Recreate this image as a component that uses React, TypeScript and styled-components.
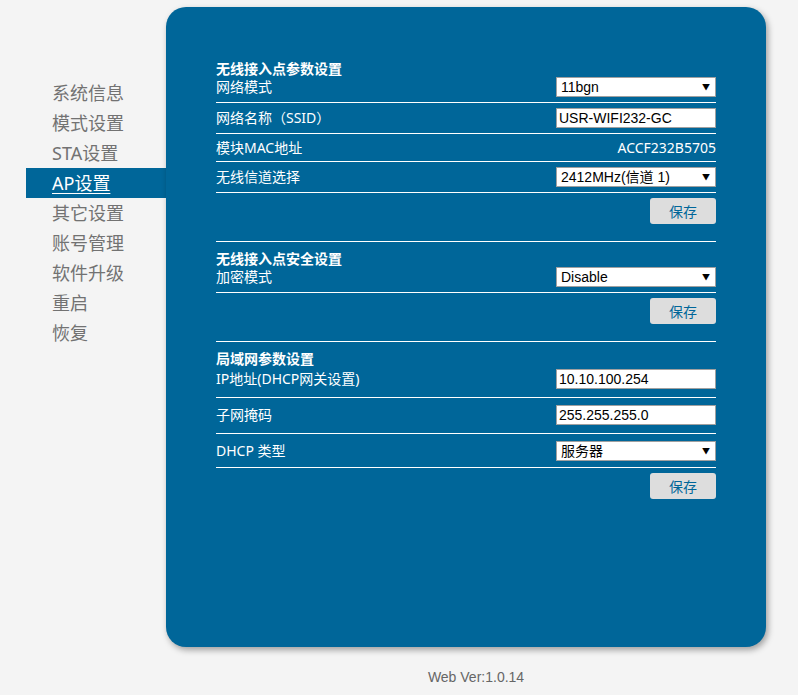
import React from 'react';
import styled, { createGlobalStyle } from 'styled-components';

const GlobalStyle = createGlobalStyle`
  body {
    margin: 0;
    background: #f4f4f4;
    font-family: 'Noto Sans', 'Noto Sans CJK SC', sans-serif;
  }
`;

const Page = styled.div`
  width: 798px;
  height: 695px;
  display: flex;
  flex-direction: column;
`;

const Main = styled.div`
  display: flex;
  padding-left: 26px;
`;

const Side = styled.ul`
  width: 140px;
  margin: 0;
  padding: 78px 0 0;
  list-style: none;
`;

const SideItem = styled.li<{ $active?: boolean }>`
  height: 30px;
  line-height: 30px;
  padding-left: 26px;
  font-size: 18px;
  font-family: 'Noto Sans', 'Noto Sans CJK SC', sans-serif;
  color: ${(p) => (p.$active ? '#ffffff' : '#727272')};
  background: ${(p) => (p.$active ? '#006699' : 'transparent')};
  text-decoration: ${(p) => (p.$active ? 'underline' : 'none')};
  text-underline-offset: 3px;
  cursor: pointer;
`;

const Panel = styled.div`
  margin-top: 7px;
  width: 600px;
  height: 640px;
  box-sizing: border-box;
  padding: 46px 50px 0;
  background: #006699;
  border-radius: 20px;
  box-shadow: 2px 3px 6px rgba(0, 0, 0, 0.35);
  color: #ffffff;
`;

const Section = styled.section<{ $first?: boolean }>`
  padding-top: ${(p) => (p.$first ? 7 : 8)}px;
  border-top: ${(p) => (p.$first ? 'none' : '1px solid #ffffff')};
`;

const Title = styled.div`
  font-size: 14px;
  font-weight: bold;
  line-height: 17px;
`;

const Row = styled.div<{ $pt?: number; $pb?: number }>`
  display: flex;
  align-items: center;
  justify-content: space-between;
  padding: ${(p) => p.$pt ?? 5}px 0 ${(p) => p.$pb ?? 5}px;
  border-bottom: 1px solid #ffffff;
  font-size: 14px;
  line-height: 17px;
`;

// labels next to a field sit a little above the field's middle
const Label = styled.span`
  margin-top: -2px;
`;

const Value = styled.span`
  font-size: 14px;
`;

const TextInput = styled.input`
  width: 160px;
  height: 20px;
  box-sizing: border-box;
  border: 1px solid #a0a0a0;
  padding: 0 2px;
  font-family: 'Liberation Sans', Arial, sans-serif;
  font-size: 14px;
  color: #000;
  background: #fff;
  outline: none;
`;

const SelectWrap = styled.div`
  position: relative;
  width: 160px;
  height: 20px;
  &::after {
    content: '▼';
    position: absolute;
    right: 6px;
    top: 5px;
    font-size: 8px;
    line-height: 10px;
    color: #000;
    pointer-events: none;
  }
`;

const Select = styled.select`
  appearance: none;
  width: 100%;
  height: 100%;
  box-sizing: border-box;
  border: 1px solid #a0a0a0;
  border-radius: 0;
  padding: 0 4px;
  font-family: 'Liberation Sans', 'Noto Sans CJK SC', Arial, sans-serif;
  font-size: 14px;
  color: #000;
  background: #fff;
  outline: none;
`;

const Actions = styled.div`
  display: flex;
  justify-content: flex-end;
  padding: 5px 0 17px;
`;

const SaveButton = styled.button`
  width: 66px;
  height: 26px;
  border: none;
  border-radius: 3px;
  background: #dddddd;
  color: #006699;
  font-family: 'Noto Sans CJK SC', sans-serif;
  font-size: 14px;
  cursor: pointer;
`;

const Footer = styled.div`
  padding: 22px 0 0 154px;
  text-align: center;
  font-family: 'Liberation Sans', Arial, sans-serif;
  font-size: 14px;
  color: #666666;
`;

const Dropdown = ({ value, options }: { value: string; options: string[] }) => (
  <SelectWrap>
    <Select defaultValue={value}>
      {options.map((o) => (
        <option key={o}>{o}</option>
      ))}
    </Select>
  </SelectWrap>
);

const menu = ['系统信息', '模式设置', 'STA设置', 'AP设置', '其它设置', '账号管理', '软件升级', '重启', '恢复'];

export default function App() {
  return (
    <Page>
      <GlobalStyle />
      <Main>
        <Side>
          {menu.map((m) => (
            <SideItem key={m} $active={m === 'AP设置'}>
              {m}
            </SideItem>
          ))}
        </Side>
        <Panel>
          <Section $first>
            <Title>无线接入点参数设置</Title>
            <Row $pt={0}>
              <Label>网络模式</Label>
              <Dropdown value="11bgn" options={['11b', '11bg', '11bgn']} />
            </Row>
            <Row>
              <Label>网络名称（SSID）</Label>
              <TextInput defaultValue="USR-WIFI232-GC" />
            </Row>
            <Row>
              <span>模块MAC地址</span>
              <Value>ACCF232B5705</Value>
            </Row>
            <Row>
              <Label>无线信道选择</Label>
              <Dropdown value="2412MHz(信道 1)" options={['2412MHz(信道 1)', '2437MHz(信道 6)', '2462MHz(信道 11)']} />
            </Row>
            <Actions>
              <SaveButton>保存</SaveButton>
            </Actions>
          </Section>
          <Section>
            <Title>无线接入点安全设置</Title>
            <Row $pt={0}>
              <Label>加密模式</Label>
              <Dropdown value="Disable" options={['Disable', 'WPA2-PSK']} />
            </Row>
            <Actions>
              <SaveButton>保存</SaveButton>
            </Actions>
          </Section>
          <Section>
            <Title>局域网参数设置</Title>
            <Row $pt={2} $pb={8}>
              <Label>IP地址(DHCP网关设置)</Label>
              <TextInput defaultValue="10.10.100.254" />
            </Row>
            <Row $pt={7} $pb={8}>
              <Label>子网掩码</Label>
              <TextInput defaultValue="255.255.255.0" />
            </Row>
            <Row $pt={7} $pb={6}>
              <Label>DHCP 类型</Label>
              <Dropdown value="服务器" options={['服务器', '禁用']} />
            </Row>
            <Actions>
              <SaveButton>保存</SaveButton>
            </Actions>
          </Section>
        </Panel>
      </Main>
      <Footer>Web Ver:1.0.14</Footer>
    </Page>
  );
}
